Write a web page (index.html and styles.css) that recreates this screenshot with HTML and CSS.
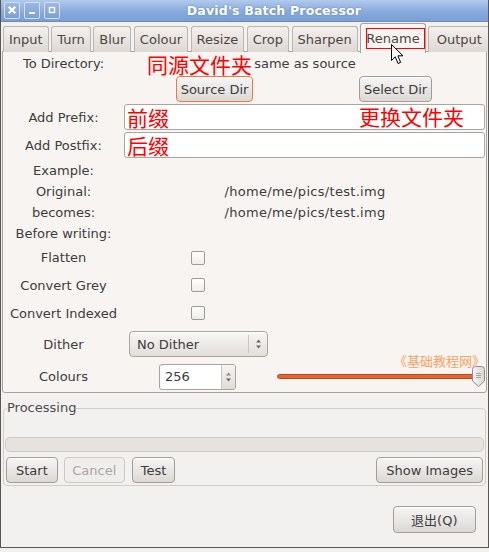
FILE: index.html
```html
<!DOCTYPE html>
<html>
<head>
<meta charset="utf-8">
<title>David's Batch Processor</title>
<link rel="stylesheet" href="styles.css">
</head>
<body>
<div class="window">
  <header class="titlebar">
    <div class="wm-buttons">
      <span class="wm-btn"><svg viewBox="0 0 16 17" width="16" height="17"><path d="M5.5 5.5 L10.5 10.5 M10.5 5.5 L5.5 10.5" stroke="#fff" stroke-width="2.2" stroke-linecap="square"/></svg></span>
      <span class="wm-btn"><svg viewBox="0 0 16 17" width="16" height="17"><rect x="5" y="10" width="6" height="2" fill="#fff"/></svg></span>
      <span class="wm-btn"><svg viewBox="0 0 16 17" width="16" height="17"><rect x="5.5" y="5.5" width="5" height="5" fill="none" stroke="#fff" stroke-width="1.4"/></svg></span>
    </div>
    <div class="title">David's Batch Processor</div>
  </header>

  <nav class="tabs">
    <div class="tab">Input</div>
    <div class="tab">Turn</div>
    <div class="tab">Blur</div>
    <div class="tab">Colour</div>
    <div class="tab">Resize</div>
    <div class="tab">Crop</div>
    <div class="tab">Sharpen</div>
    <div class="tab active">Rename</div>
    <div class="tab last">Output</div>
  </nav>

  <section class="page">
    <div class="form">
      <div class="lbl">To Directory:</div>
      <div class="wide center">same as source</div>

      <div class="wide halves">
        <div class="half"><button class="btn dir focus">Source Dir</button></div>
        <div class="half"><button class="btn dir">Select Dir</button></div>
      </div>

      <div class="lbl">Add Prefix:</div>
      <div class="wide"><div class="entry"><span class="red">前缀</span></div></div>

      <div class="lbl">Add Postfix:</div>
      <div class="wide"><div class="entry"><span class="red">后缀</span></div></div>

      <div class="lbl">Example:</div>

      <div class="lbl">Original:</div>
      <div class="wide center path">/home/me/pics/test.img</div>

      <div class="lbl">becomes:</div>
      <div class="wide center path">/home/me/pics/test.img</div>

      <div class="lbl">Before writing:</div>

      <div class="lbl">Flatten</div>
      <div class="c2 center"><span class="check"></span></div>

      <div class="lbl">Convert Grey</div>
      <div class="c2 center"><span class="check"></span></div>

      <div class="lbl">Convert Indexed</div>
      <div class="c2 center"><span class="check"></span></div>

      <div class="lbl">Dither</div>
      <div class="c2">
        <div class="combo">
          <span class="combo-text">No Dither</span>
          <span class="combo-sep"></span>
          <span class="arrows"><svg viewBox="0 0 7 12" width="7" height="12"><path d="M1 4.5 L3.5 1.5 L6 4.5 Z M1 7.5 L3.5 10.5 L6 7.5 Z" fill="#6a6662"/></svg></span>
        </div>
      </div>

      <div class="lbl">Colours</div>
      <div class="c2 center">
        <div class="spin">
          <span class="spin-text">256</span>
          <span class="spin-btns"><svg viewBox="0 0 7 12" width="7" height="12"><path d="M1 4.5 L3.5 1.5 L6 4.5 Z" fill="#8a8682"/><path d="M1 7.5 L3.5 10.5 L6 7.5 Z" fill="#6a6662"/></svg></span>
        </div>
      </div>
      <div class="c3">
        <div class="slider">
          <div class="track"></div>
          <svg class="thumb" viewBox="0 0 13 21" width="13" height="21"><defs><linearGradient id="tg" x1="0" y1="0" x2="1" y2="0"><stop offset="0" stop-color="#f6f5f4"/><stop offset="1" stop-color="#d9d6d3"/></linearGradient></defs><path d="M0.5 3.5 Q0.5 0.5 3.5 0.5 L9.5 0.5 Q12.5 0.5 12.5 3.5 L12.5 15 L6.5 20.5 L0.5 15 Z" fill="url(#tg)" stroke="#8f8a86"/><path d="M4 7.5 H9 M4 9.5 H9 M4 11.5 H9" stroke="#aaa5a0"/></svg>
        </div>
      </div>
    </div>
  </section>

  <fieldset class="processing">
    <legend>Processing</legend>
    <div class="progress"></div>
    <div class="actions">
      <button class="btn">Start</button>
      <button class="btn disabled">Cancel</button>
      <button class="btn test">Test</button>
      <span class="spacer"></span>
      <button class="btn">Show Images</button>
    </div>
  </fieldset>

  <div class="footer">
    <button class="btn quit">退出(Q)</button>
  </div>

  <div class="note note-source">同源文件夹</div>
  <div class="note note-change">更换文件夹</div>
  <div class="note-box"></div>
  <div class="watermark">《基础教程网》</div>
  <svg class="cursor" viewBox="0 0 13 21" width="13" height="21"><path d="M0.5 0.5 L0.5 16.5 L4.3 12.8 L7 19.5 L9.6 18.4 L6.9 11.8 L12 11.8 Z" fill="#fff" stroke="#000" stroke-width="1" stroke-linejoin="round"/></svg>
</div>
</body>
</html>
```

FILE: styles.css
```css
* { box-sizing: border-box; }

body {
  margin: 0;
  background: #f2f1f0;
  font-family: "DejaVu Sans", "Noto Sans CJK SC", sans-serif;
  font-size: 13px;
  color: #3c3c3c;
}

.window {
  position: relative;
  width: 489px;
  height: 548px;
  background: #f2f1f0;
  border-left: 1px solid #5a5753;
  border-right: 1px solid #5a5753;
  border-bottom: 1px solid #5a5753;
  display: flex;
  flex-direction: column;
  overflow: hidden;
}

/* title bar */
.titlebar {
  height: 22px;
  display: flex;
  align-items: center;
  background: linear-gradient(#b1caec, #89abdd 55%, #7b9fd6);
  border-bottom: 1px solid #6c8cc0;
}
.wm-buttons {
  display: flex;
  gap: 4px;
  padding-left: 3px;
}
.wm-btn {
  width: 16px;
  height: 17px;
  display: block;
  border: 1px solid #d6e2f3;
  border-radius: 2px;
  background: linear-gradient(#9cb9e4, #7a9fd6);
}
.wm-btn svg { display: block; margin: -1px; }
.title {
  flex: 1;
  text-align: center;
  color: #fff;
  font-weight: bold;
  font-size: 12.5px;
  letter-spacing: 0.2px;
  text-shadow: 0 0 2px #5a7bb0;
}

/* tabs */
.tabs {
  height: 30px;
  display: flex;
  align-items: flex-end;
  gap: 2.5px;
  padding-left: 2px;
  position: relative;
  z-index: 1;
}
.tab {
  height: 26px;
  padding: 0 5px;
  display: flex;
  align-items: center;
  border: 1px solid #bcb6b1;
  border-bottom: none;
  border-radius: 3px 3px 0 0;
  background: linear-gradient(#f3f0ee, #ddd8d4);
  color: #4c4742;
}
.tab.last { padding: 0 7.5px; }
.tab.active {
  height: 30px;
  margin-bottom: -1px;
  background: #f8f4f2;
  border-color: #a8a29d;
}

/* notebook page */
.page {
  margin: -1px 1px 0 1px;
  border: 1px solid #a8a29d;
  border-radius: 0 0 3px 3px;
  background: #f8f4f2;
}
.form {
  display: grid;
  grid-template-columns: 121px 147px 215px;
  grid-template-rows: 23px 28px 28px 28px 22px 21px 20px 22px 27px 28px 28px 34px 31px;
  align-items: center;
}
.lbl { grid-column: 1; text-align: center; white-space: nowrap; }
.wide { grid-column: 2 / 4; }
.c2 { grid-column: 2; }
.c3 { grid-column: 3; }
.center { text-align: center; display: flex; justify-content: center; }
.path { letter-spacing: 0.3px; }

.halves { display: flex; }
.half { flex: 1; display: flex; justify-content: center; }

.btn {
  font: inherit;
  color: #3c3c3c;
  height: 26px;
  padding: 0 9px;
  border: 1px solid #a29d98;
  border-radius: 4px;
  background: linear-gradient(#f7f6f5, #dcd8d4);
  box-shadow: inset 0 1px 0 #fff;
  white-space: nowrap;
}
.btn.dir { padding: 0 4px; }
.btn.test { padding: 0 8px; margin-left: 1px; }
.btn.focus { border-color: #e8784a; }
.btn.disabled {
  padding: 0 7.5px;
  color: #aaa6a2;
  border-color: #cdc9c5;
  background: #f0eeec;
  box-shadow: none;
}

.entry {
  height: 26px;
  border: 1px solid #aaa5a0;
  border-radius: 3px;
  background: #fff;
  padding-left: 2px;
  display: flex;
  align-items: center;
  margin-right: 1px;
}
.red {
  color: #ff0000;
  font-family: "Noto Sans CJK SC", sans-serif;
  font-size: 21px;
  line-height: 1;
}

.check {
  width: 14px;
  height: 14px;
  border: 1px solid #a09b96;
  border-radius: 2px;
  background: linear-gradient(#ffffff, #efedeb);
}

.combo {
  margin: 0 3px 0 5px;
  height: 26px;
  border: 1px solid #a9a49f;
  border-radius: 4px;
  background: linear-gradient(#f8f6f4, #e2deda);
  box-shadow: inset 0 1px 0 #fff;
  display: flex;
  align-items: center;
}
.combo-text { flex: 1; padding-left: 7px; }
.combo-sep { width: 1px; height: 18px; background: #cbc6c1; }
.arrows { width: 18px; display: flex; justify-content: center; }
.arrows svg, .spin-btns svg { display: block; }

.spin {
  width: 77px;
  height: 26px;
  border: 1px solid #a9a49f;
  border-radius: 3px;
  background: #fff;
  display: flex;
  overflow: hidden;
}
.spin-text { flex: 1; padding-left: 5px; display: flex; align-items: center; }
.spin-btns {
  width: 14px;
  border-left: 1px solid #cbc6c1;
  background: linear-gradient(#f6f4f2, #e0dcd8);
  display: flex;
  align-items: center;
  justify-content: center;
}

.slider {
  margin: 0 1px 0 6px;
  display: flex;
  align-items: center;
  height: 21px;
}
.track {
  flex: 1;
  height: 5px;
  margin-right: -6px;
  border-radius: 3px;
  background: #e4652f;
  border: 1px solid #c24b1d;
}
.thumb { display: block; position: relative; }

/* processing frame */
.processing {
  margin: 7px 2px 0 2px;
  padding: 0 1px 2px 1px;
  border: 1px solid #d1cdc9;
  border-radius: 4px;
  min-width: 0;
}
.processing legend {
  padding: 0;
  margin-left: 2px;
  line-height: 16px;
  color: #4c4c4c;
}
.progress {
  margin-top: 21px;
  height: 15px;
  border: 1px solid #cfcac6;
  border-radius: 5px;
  background: #e6e2df;
}
.actions {
  margin-top: 5px;
  display: flex;
  gap: 6px;
  padding: 0 1px 0 1px;
}
.spacer { flex: 1; }

.footer {
  display: flex;
  justify-content: flex-end;
  padding: 20px 12px 0 0;
}
.quit {
  font-family: "DejaVu Sans", "Noto Sans CJK SC", sans-serif;
  padding: 0 17.5px;
  height: 27px;
}

/* overlays (annotations on top of the screenshot) */
.note {
  position: absolute;
  z-index: 2;
  color: #ff0000;
  font-family: "Noto Sans CJK SC", sans-serif;
  font-size: 21px;
  line-height: 21px;
}
.note-source { left: 146px; top: 54px; }
.note-change { left: 358px; top: 106px; }
.note-box {
  position: absolute;
  z-index: 2;
  left: 365px;
  top: 28px;
  width: 59px;
  height: 21px;
  border: 1.5px solid #ff0000;
}
.watermark {
  position: absolute;
  z-index: 2;
  left: 393px;
  top: 353px;
  color: #f8a25c;
  font-family: "Noto Sans CJK SC", sans-serif;
  font-size: 13px;
  line-height: 16px;
}
.cursor {
  position: absolute;
  z-index: 3;
  left: 390px;
  top: 44px;
}
```
